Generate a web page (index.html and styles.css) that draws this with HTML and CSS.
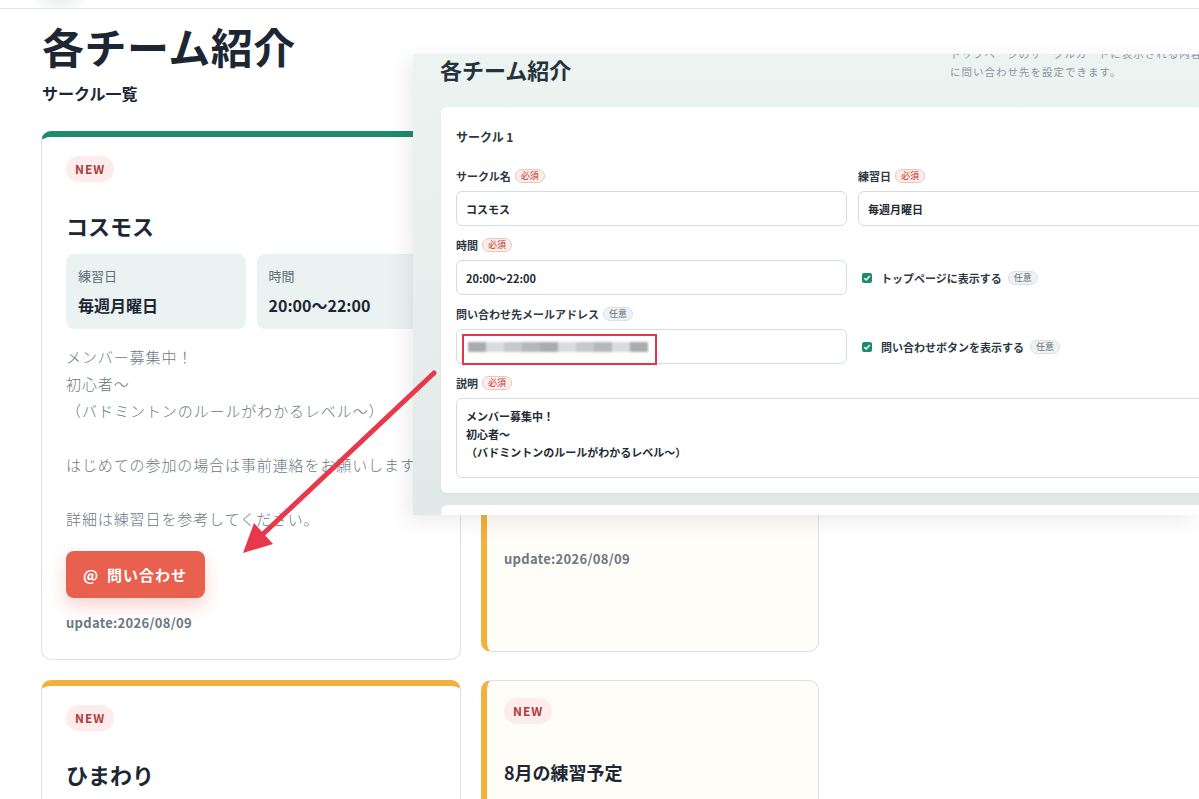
FILE: index.html
```html
<!DOCTYPE html>
<html lang="ja">
<head>
  <meta charset="UTF-8">
  <meta name="viewport" content="width=device-width, initial-scale=1.0">
  <title>各チーム紹介</title>
  <link rel="stylesheet" href="styles.css">
</head>
<body>
  <!-- Site header -->
  <header class="site-header">
    <div class="logo"></div>
  </header>

  <main class="page">
    <h1 class="page-title">各チーム紹介</h1>
    <h2 class="section-title">サークル一覧</h2>

    <div class="card-grid">
      <article class="team-card green">
        <span class="badge-new">NEW</span>
        <h3 class="card-title">コスモス</h3>
        <div class="info-row">
          <div class="info-box">
            <div class="info-label">練習日</div>
            <div class="info-value">毎週月曜日</div>
          </div>
          <div class="info-box">
            <div class="info-label">時間</div>
            <div class="info-value">20:00〜22:00</div>
          </div>
        </div>
        <p class="card-text">メンバー募集中！<br>初心者〜<br>（バドミントンのルールがわかるレベル〜）<br><br>はじめての参加の場合は事前連絡をお願いします。<br><br>詳細は練習日を参考してください。</p>
        <button class="contact-btn"><span class="at">@</span>問い合わせ</button>
        <div class="updated">update:2026/08/09</div>
      </article>

      <article class="team-card notice">
        <span class="badge-new">NEW</span>
        <h3 class="card-title small">7月の練習予定</h3>
        <p class="card-text">7/1（月）20:00〜22:00<br>7/8（月）20:00〜22:00<br>7/15（月）休み<br>7/22（月）20:00〜22:00<br>7/29（月）20:00〜22:00<br><br>場所：市民体育館<br><br>※変更がある場合はお知らせします。</p>
        <div class="updated">update:2026/08/09</div>
      </article>

      <article class="team-card orange">
        <span class="badge-new">NEW</span>
        <h3 class="card-title">ひまわり</h3>
        <div class="info-row">
          <div class="info-box">
            <div class="info-label">練習日</div>
            <div class="info-value">毎週水曜日</div>
          </div>
          <div class="info-box">
            <div class="info-label">時間</div>
            <div class="info-value">19:00〜21:00</div>
          </div>
        </div>
      </article>

      <article class="team-card notice">
        <span class="badge-new">NEW</span>
        <h3 class="card-title small">8月の練習予定</h3>
        <p class="card-text">8/5（月）20:00〜22:00<br>8/12（月）休み</p>
      </article>
    </div>
  </main>

  <!-- Admin screen capture laid over the page -->
  <div class="shot">
    <div class="shot-head">
      <h2 class="shot-title">各チーム紹介</h2>
      <p class="shot-note">トップページのサークルカードに表示される内容と、サークルごと<br>に問い合わせ先を設定できます。</p>
    </div>

    <div class="form-card">
      <div class="form-heading">サークル 1</div>
      <div class="form-grid">
        <div class="field">
          <div class="field-label">サークル名 <span class="tag req">必須</span></div>
          <div class="input">コスモス</div>
        </div>
        <div class="field">
          <div class="field-label">練習日 <span class="tag req">必須</span></div>
          <div class="input">毎週月曜日</div>
        </div>

        <div class="field">
          <div class="field-label">時間 <span class="tag req">必須</span></div>
          <div class="input">20:00〜22:00</div>
        </div>
        <div class="check-field">
          <span class="checkbox"><svg width="8" height="8" viewBox="0 0 8 8"><path d="M1.3 4.2 L3.2 6 L6.8 1.9" fill="none" stroke="#fff" stroke-width="1.5"/></svg></span>
          トップページに表示する <span class="tag opt">任意</span>
        </div>

        <div class="field">
          <div class="field-label">問い合わせ先メールアドレス <span class="tag opt">任意</span></div>
          <div class="input email">
            <div class="blurred">
              <span class="b1"></span><span class="b4"></span><span class="b2"></span><span class="b3"></span><span class="b1"></span><span class="b4"></span><span class="b2"></span><span class="b3"></span><span class="b4"></span><span class="b1"></span>
            </div>
            <div class="mark"></div>
          </div>
        </div>
        <div class="check-field">
          <span class="checkbox"><svg width="8" height="8" viewBox="0 0 8 8"><path d="M1.3 4.2 L3.2 6 L6.8 1.9" fill="none" stroke="#fff" stroke-width="1.5"/></svg></span>
          問い合わせボタンを表示する <span class="tag opt">任意</span>
        </div>

        <div class="field wide">
          <div class="field-label">説明 <span class="tag req">必須</span></div>
          <div class="textarea">メンバー募集中！<br>初心者〜<br>（バドミントンのルールがわかるレベル〜）</div>
        </div>
      </div>
    </div>
    <div class="form-card next"></div>
  </div>

  <!-- Annotation arrow -->
  <svg class="arrow" width="1199" height="799" viewBox="0 0 1199 799">
    <line x1="434" y1="373" x2="262" y2="535" stroke="#e8384b" stroke-width="5" stroke-linecap="round"/>
    <polygon points="243,553 273,544 254,523" fill="#e8384b"/>
  </svg>
</body>
</html>
```

FILE: styles.css
```css
/* Team introduction page */
html, body {
  overflow: hidden;
}

body {
  margin: 0;
  font-family: "Noto Sans CJK JP", "Noto Sans", sans-serif;
  color: #1c2733;
  background: #fff;
}

.site-header {
  height: 8px;
  border-bottom: 1px solid #dfe7e6;
  padding-left: 28px;
  overflow: hidden;
}

.logo {
  width: 64px;
  height: 44px;
  margin-top: -30px;
  background: radial-gradient(ellipse at center, rgba(196, 214, 210, 0.55), rgba(255, 255, 255, 0) 70%);
}

.page {
  padding-left: 41px;
}

.page-title {
  font-size: 42px;
  line-height: 50px;
  font-weight: 700;
  margin: 12px 0 0 1px;
  letter-spacing: 0.5px;
}

.section-title {
  font-size: 16px;
  line-height: 24px;
  font-weight: 700;
  margin: 10px 0 0 1px;
}

/* Cards */
.card-grid {
  display: grid;
  grid-template-columns: 420px 338px;
  gap: 20px;
  margin-top: 26px;
}

.team-card {
  box-sizing: border-box;
  border: 1px solid #d9e1e7;
  border-radius: 10px;
  background: #fff;
  padding: 19px 24px 27px;
  display: flex;
  flex-direction: column;
  align-items: flex-start;
}

.team-card.green {
  border-top: 6px solid #1f8a6e;
}

.team-card.orange {
  border-top: 6px solid #f2b03c;
}

.team-card.notice {
  border-left: 6px solid #f2b03c;
  background: #fffdf8;
  padding: 17px 17px;
  margin-bottom: 8px;
}

.badge-new {
  font-size: 12px;
  font-weight: 700;
  letter-spacing: 1px;
  color: #b23b3b;
  background: #fdeceb;
  border-radius: 13px;
  height: 26px;
  line-height: 26px;
  padding: 0 9px;
}

.card-title {
  font-size: 22px;
  line-height: 30px;
  font-weight: 700;
  margin: 28px 0 0;
}

.card-title.small {
  font-size: 18px;
  line-height: 26px;
  margin-top: 35px;
}

.info-row {
  display: grid;
  grid-template-columns: 1fr 1fr;
  gap: 11px;
  width: 100%;
  margin-top: 14px;
}

.info-box {
  background: #eaf3f1;
  border-radius: 8px;
  padding: 12px;
}

.info-label {
  font-size: 13px;
  line-height: 19px;
  color: #5f6b77;
}

.info-value {
  font-size: 16px;
  line-height: 24px;
  font-weight: 700;
  margin-top: 8px;
}

.card-text {
  margin: 14px 0 0;
  font-size: 15px;
  line-height: 27px;
  letter-spacing: 0.9px;
  font-weight: 300;
  color: #6d7781;
}

.notice .card-text {
  margin-top: 18px;
  line-height: 28px;
}

.contact-btn {
  margin-top: 19px;
  height: 47px;
  padding: 0 18px 0 17px;
  border: none;
  border-radius: 8px;
  background: #e8604e;
  color: #fff;
  font-family: inherit;
  font-size: 15px;
  font-weight: 700;
  letter-spacing: 1px;
  box-shadow: 0 8px 18px rgba(232, 96, 78, 0.28);
}

.contact-btn .at {
  margin-right: 8px;
}

.updated {
  margin-top: 16px;
  font-size: 13px;
  line-height: 18px;
  font-weight: 700;
  letter-spacing: 0.3px;
  color: #6d7782;
}

.notice .updated {
  margin-top: 44px;
}

/* Screen capture of the admin form */
.shot {
  position: absolute;
  left: 413px;
  top: 54px;
  width: 786px;
  height: 461px;
  overflow: hidden;
  background: linear-gradient(#ebf4f1, #e2eae9);
  box-shadow: -6px 6px 20px rgba(0, 0, 0, 0.08);
}

.shot-head {
  display: grid;
  grid-template-columns: 510px 1fr;
  padding-left: 27px;
  margin-top: -9px;
}

.shot-title {
  margin: 10px 0 0;
  font-size: 22px;
  line-height: 28px;
  font-weight: 700;
  color: #26313c;
}

.shot-note {
  margin: 0;
  font-size: 10.5px;
  line-height: 18px;
  letter-spacing: 1px;
  color: #8c969e;
  white-space: nowrap;
}

.form-card {
  box-sizing: border-box;
  width: 823px;
  margin: 24px 0 0 28px;
  padding: 21px 15px 15px;
  background: #fff;
  border-radius: 6px;
  box-shadow: 0 1px 3px rgba(0, 0, 0, 0.05);
}

.form-card.next {
  margin-top: 12px;
  height: 60px;
  padding: 0;
}

.form-heading {
  font-size: 12px;
  line-height: 18px;
  font-weight: 700;
  color: #2b3640;
}

.form-grid {
  display: grid;
  grid-template-columns: 391px 391px;
  column-gap: 11px;
  row-gap: 11px;
  margin-top: 22px;
}

.field {
  display: flex;
  flex-direction: column;
  gap: 7px;
}

.field.wide {
  grid-column: 1 / -1;
}

.field-label {
  display: flex;
  align-items: center;
  gap: 4px;
  height: 16px;
  font-size: 11px;
  font-weight: 700;
  color: #2e3944;
}

.tag {
  font-size: 9px;
  line-height: 12px;
  font-weight: 400;
  padding: 0 5px;
  border: 1px solid;
  border-radius: 8px;
}

.tag.req {
  color: #c0392b;
  background: #fdeeec;
  border-color: #f1c3bb;
}

.tag.opt {
  color: #66717b;
  background: #eef2f4;
  border-color: #d9e1e5;
  margin-left: 6px;
}

.field-label .tag.opt {
  margin-left: 0;
}

.input {
  box-sizing: border-box;
  height: 35px;
  border: 1px solid #d3dddf;
  border-radius: 6px;
  padding: 0 9px;
  display: flex;
  align-items: center;
  font-size: 11px;
  font-weight: 700;
  color: #222b33;
}

.input.email {
  position: relative;
}

.blurred {
  display: flex;
  height: 10px;
  margin-left: 2px;
  filter: blur(1.2px);
}

.blurred span {
  width: 18px;
  height: 10px;
}

.blurred .b1 { background: #a9abae; }
.blurred .b2 { background: #c7c8cb; }
.blurred .b3 { background: #b5b7ba; }
.blurred .b4 { background: #dadbde; }

.mark {
  position: absolute;
  left: 5px;
  top: 4px;
  width: 195px;
  height: 31px;
  box-sizing: border-box;
  border: 2px solid #e5364b;
}

.check-field {
  display: flex;
  align-items: center;
  align-self: end;
  height: 35px;
  padding-left: 4px;
  font-size: 11px;
  font-weight: 700;
  color: #2e3944;
}

.checkbox {
  width: 10px;
  height: 10px;
  border-radius: 2px;
  background: #1f8a6e;
  display: flex;
  align-items: center;
  justify-content: center;
  margin-right: 9px;
}

.textarea {
  box-sizing: border-box;
  height: 80px;
  border: 1px solid #d3dddf;
  border-radius: 6px;
  padding: 8px 9px;
  font-size: 11px;
  line-height: 18px;
  font-weight: 700;
  color: #222b33;
}

/* Annotation */
.arrow {
  position: absolute;
  left: 0;
  top: 0;
  pointer-events: none;
}
```
